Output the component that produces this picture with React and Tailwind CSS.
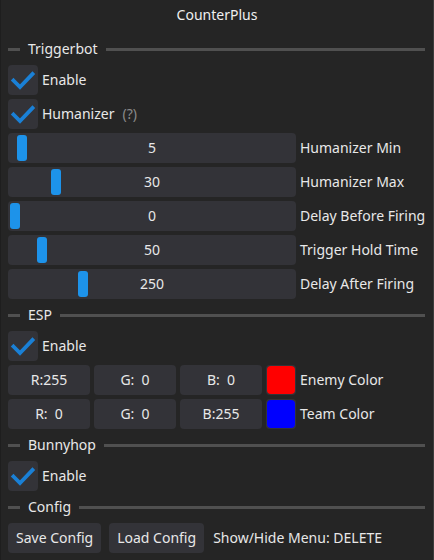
import React from "react";

const font = { fontFamily: '"Noto Sans", "Open Sans", sans-serif' };

function Check() {
  return (
    <div className="w-[30px] h-[30px] rounded-[4px] bg-[#333338] flex items-center justify-center shrink-0">
      <svg width="30" height="30" viewBox="0 0 30 30">
        <path d="M5.5 15.5 L12 22 L24.5 9" fill="none" stroke="#1a80d6" strokeWidth="3.8" strokeLinecap="square" strokeLinejoin="miter" />
      </svg>
    </div>
  );
}

function Sep({ label }) {
  return (
    <div className="h-[24px] flex items-center gap-[8px] pr-[8px]">
      <div className="w-[12px] h-[3px] bg-[#505050]" />
      <span className="text-[#e8e8e8]">{label}</span>
      <div className="flex-1 h-[3px] bg-[#505050]" />
    </div>
  );
}

function CheckRow({ label, extra }) {
  return (
    <div className="flex items-center gap-[4px] h-[30px]">
      <Check />
      <span className="text-[#e8e8e8]">{label}</span>
      {extra && <span className="text-[#8a8a8a] ml-[4px]">{extra}</span>}
    </div>
  );
}

function Slider({ value, grab, label }) {
  return (
    <div className="flex items-center gap-[4px] h-[30px]">
      <div className="relative w-[288px] h-[30px] rounded-[4px] bg-[#333338] flex items-center justify-center shrink-0">
        <div className="absolute top-[2px] w-[10px] h-[26px] rounded-[3px] bg-[#1d93ea]" style={{ left: grab }} />
        <span className="relative text-[#e8e8e8]">{value}</span>
      </div>
      <span className="text-[#e8e8e8] whitespace-nowrap">{label}</span>
    </div>
  );
}

function Box({ text }) {
  return (
    <div className="w-[82px] h-[30px] rounded-[4px] bg-[#333338] flex items-center justify-center text-[#e8e8e8] whitespace-pre shrink-0">
      {text}
    </div>
  );
}

function ColorRow({ r, g, b, color, label }) {
  return (
    <div className="flex items-center gap-[4px] h-[30px]">
      <Box text={r} />
      <Box text={g} />
      <Box text={b} />
      <div className="w-[30px] h-[30px] rounded-[4px] shrink-0 flex items-center justify-center bg-[#333338]">
        <div className="w-[28px] h-[28px] rounded-[4px]" style={{ background: color }} />
      </div>
      <span className="text-[#e8e8e8] whitespace-nowrap">{label}</span>
    </div>
  );
}

export default function App() {
  return (
    <div className="w-[434px] h-[560px] bg-[#252525] text-[14px] leading-none border-r border-[#3c3c3c] border-l border-l-[#1e1e1e] overflow-hidden" style={font}>
      <div className="h-[29px] flex items-center justify-center text-[#f0f0f0]">CounterPlus</div>
      <div className="pl-[7px] pt-[8px] flex flex-col gap-[4px]">
        <Sep label="Triggerbot" />
        <CheckRow label="Enable" />
        <CheckRow label="Humanizer" extra="(?)" />
        <Slider value="5" grab={9} label="Humanizer Min" />
        <Slider value="30" grab={43} label="Humanizer Max" />
        <Slider value="0" grab={2} label="Delay Before Firing" />
        <Slider value="50" grab={29} label="Trigger Hold Time" />
        <Slider value="250" grab={70} label="Delay After Firing" />
        <Sep label="ESP" />
        <CheckRow label="Enable" />
        <ColorRow r="R:255" g="G:  0" b="B:  0" color="#ff0000" label="Enemy Color" />
        <ColorRow r="R:  0" g="G:  0" b="B:255" color="#0000ff" label="Team Color" />
        <Sep label="Bunnyhop" />
        <CheckRow label="Enable" />
        <Sep label="Config" />
        <div className="flex items-center h-[30px]">
          <div className="h-[30px] px-[8px] rounded-[4px] bg-[#333338] flex items-center text-[#e8e8e8] whitespace-nowrap">Save Config</div>
          <div className="ml-[8px] h-[30px] px-[8px] rounded-[4px] bg-[#333338] flex items-center text-[#e8e8e8] whitespace-nowrap">Load Config</div>
          <span className="ml-[9px] text-[#e8e8e8] whitespace-nowrap">Show/Hide Menu: DELETE</span>
        </div>
      </div>
    </div>
  );
}
